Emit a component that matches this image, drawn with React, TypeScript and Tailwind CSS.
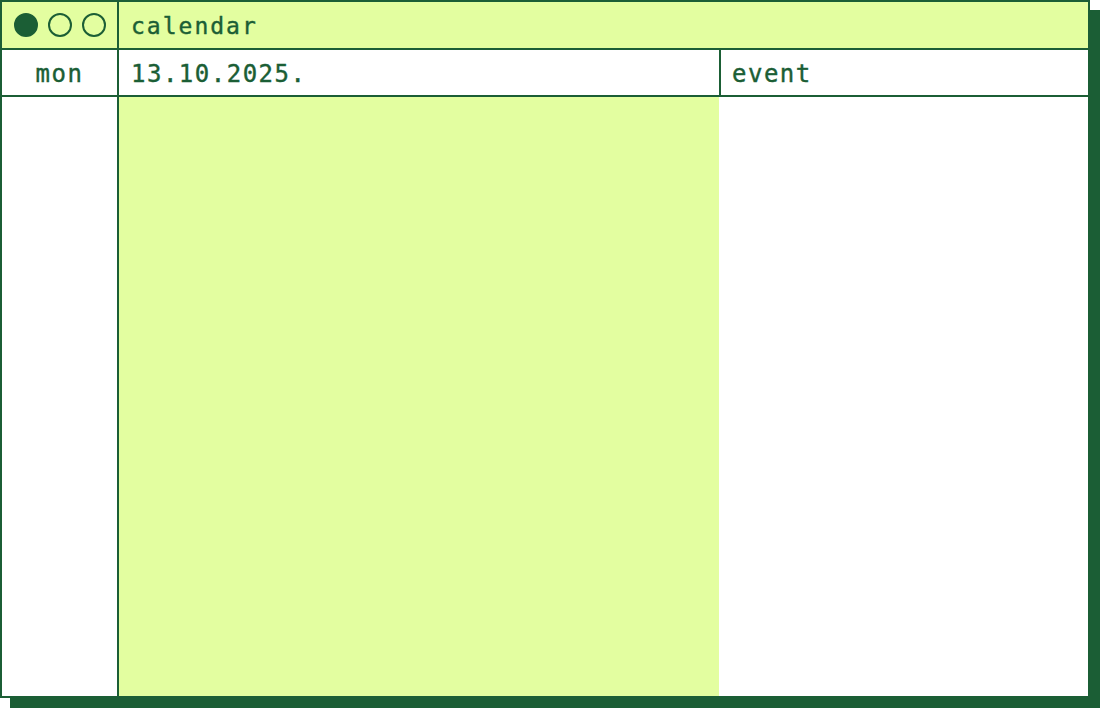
const green = "#1b5e35";

function Dot({ filled }: { filled?: boolean }) {
  return (
    <span
      className={
        "block h-6 w-6 rounded-full border-2 border-[#1b5e35] " +
        (filled ? "bg-[#1b5e35]" : "bg-transparent")
      }
    />
  );
}

export default function App() {
  return (
    <div className="h-[708px] w-[1100px] bg-white">
      <div
        className="flex h-[698px] w-[1090px] flex-col border-2 border-[#1b5e35] bg-white text-[#1b5e35] shadow-[10px_10px_0_#1b5e35]"
        style={{ fontFamily: '"DejaVu Sans Mono", monospace', color: green }}
      >
        {/* title bar */}
        <div className="flex h-[48px] shrink-0 border-b-2 border-[#1b5e35] bg-[#e3fea0]">
          <div className="flex w-[117px] shrink-0 items-center justify-center gap-[10px] border-r-2 border-[#1b5e35]">
            <Dot filled />
            <Dot />
            <Dot />
          </div>
          <div className="flex flex-1 items-center pl-3 pt-[2px] text-[23px] tracking-[2px] [-webkit-text-stroke:0.4px_#1b5e35]">
            calendar
          </div>
        </div>

        {/* column headers */}
        <div className="flex h-[47px] shrink-0 border-b-2 border-[#1b5e35] text-[24px] tracking-[1.5px] [-webkit-text-stroke:0.4px_#1b5e35]">
          <div className="flex w-[117px] shrink-0 items-center justify-center border-r-2 border-[#1b5e35] pt-[2px]">
            mon
          </div>
          <div className="flex w-[602px] shrink-0 items-center border-r-2 border-[#1b5e35] pl-3 pt-[2px]">
            13.10.2025.
          </div>
          <div className="flex flex-1 items-center pl-[11px] pt-[2px]">event</div>
        </div>

        {/* body */}
        <div className="flex flex-1">
          <div className="w-[117px] shrink-0 border-r-2 border-[#1b5e35] bg-white" />
          <div className="w-[600px] shrink-0 bg-[#e3fea0]" />
          <div className="flex-1 bg-white" />
        </div>
      </div>
    </div>
  );
}
